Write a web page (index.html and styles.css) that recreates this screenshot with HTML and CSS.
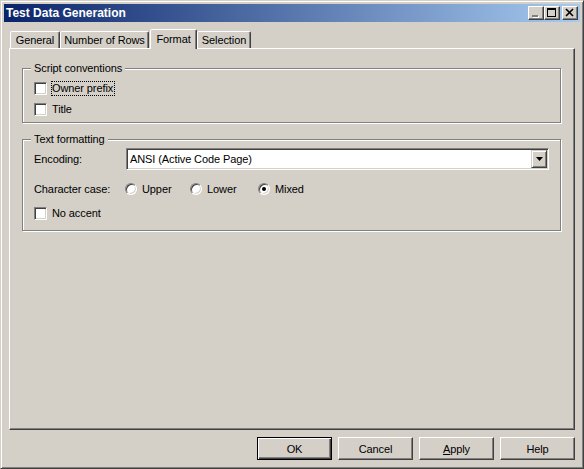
FILE: index.html
```html
<!DOCTYPE html>
<html>
<head>
<meta charset="utf-8">
<title>Test Data Generation</title>
<link rel="stylesheet" href="styles.css">
</head>
<body>
<div class="window">
  <div class="titlebar">
    <span class="title">Test Data Generation</span>
    <div class="caption-buttons">
      <span class="cbtn"><svg width="14" height="12" viewBox="0 0 14 12"><rect x="4" y="9" width="6" height="2" fill="#fff"/><rect x="3" y="8" width="6" height="2" fill="#808080"/></svg></span>
      <span class="cbtn"><svg width="14" height="12" viewBox="0 0 14 12"><rect x="2.5" y="1.5" width="8" height="8" fill="none" stroke="#000"/><rect x="2" y="2" width="9" height="1" fill="#000"/></svg></span>
      <span class="cbtn cbtn-close"><svg width="14" height="12" viewBox="0 0 14 12"><path d="M3 2 L10 9 M10 2 L3 9" stroke="#000" stroke-width="1.6" fill="none"/></svg></span>
    </div>
  </div>
  <div class="tabs">
    <div class="tab tab-general">General</div>
    <div class="tab tab-rows">Number of Rows</div>
    <div class="tab tab-format active">Format</div>
    <div class="tab tab-selection">Selection</div>
  </div>
  <div class="panel">
    <div class="group group-script">
      <div class="legend">Script conventions</div>
      <div class="check-row first"><span class="checkbox"></span><span class="check-label focus">Owner prefix</span></div>
      <div class="check-row"><span class="checkbox"></span><span class="check-label">Title</span></div>
    </div>
    <div class="group group-text">
      <div class="legend">Text formatting</div>
      <div class="field-row encoding-row">
        <span class="field-label">Encoding:</span>
        <div class="combo">
          <span class="combo-text">ANSI (Active Code Page)</span>
          <span class="combo-btn"><svg width="7" height="4" viewBox="0 0 7 4"><path d="M0 0 H7 L3.5 4 Z" fill="#000"/></svg></span>
        </div>
      </div>
      <div class="field-row case-row">
        <span class="field-label case-label">Character case:</span>
        <span class="radio-item w-upper"><span class="radio"></span>Upper</span>
        <span class="radio-item w-lower"><span class="radio"></span>Lower</span>
        <span class="radio-item"><span class="radio checked"></span>Mixed</span>
      </div>
      <div class="check-row accent-row"><span class="checkbox"></span><span class="check-label">No accent</span></div>
    </div>
  </div>
  <div class="buttons">
    <div class="btn btn-default">OK</div>
    <div class="btn">Cancel</div>
    <div class="btn"><span><u>A</u>pply</span></div>
    <div class="btn">Help</div>
  </div>
</div>
</body>
</html>
```
FILE: styles.css
```css
html, body {
  margin: 0;
  padding: 0;
  background: #D4D0C8;
}
body {
  font-family: "Liberation Sans", Arial, sans-serif;
  font-size: 11px;
  letter-spacing: -0.1px;
  color: #000;
}
.window {
  width: 584px;
  height: 469px;
  box-sizing: border-box;
  border: 1px solid;
  border-color: #D4D0C8 #404040 #404040 #D4D0C8;
  box-shadow: inset 1px 1px 0 #fff, inset -1px -1px 0 #808080;
  padding: 3px;
  display: flex;
  flex-direction: column;
  background: #D4D0C8;
}
.titlebar {
  height: 18px;
  flex: none;
  display: flex;
  align-items: center;
  background: linear-gradient(to right, #0A246A, #A6CAF0);
}
.title {
  flex: 1;
  color: #fff;
  font-weight: bold;
  font-size: 12px;
  letter-spacing: 0;
  padding-left: 2px;
  line-height: 18px;
}
.caption-buttons {
  display: flex;
  margin-right: 2px;
}
.cbtn {
  width: 16px;
  height: 14px;
  box-sizing: border-box;
  background: #D4D0C8;
  border: 1px solid;
  border-color: #fff #404040 #404040 #fff;
  box-shadow: inset -1px -1px 0 #808080;
  display: flex;
  align-items: center;
  justify-content: center;
}
.cbtn svg { display: block; }
.cbtn-close { margin-left: 2px; }

.tabs {
  flex: none;
  display: flex;
  align-items: flex-end;
  height: 19px;
  margin-top: 7px;
  padding-left: 6px;
}
.tab {
  height: 17px;
  box-sizing: border-box;
  border: 1px solid;
  border-bottom: none;
  border-color: #fff #404040 transparent #fff;
  box-shadow: inset -1px 0 0 #808080;
  border-radius: 2px 2px 0 0;
  display: flex;
  align-items: center;
  justify-content: center;
  background: #D4D0C8;
}
.tab-general { width: 50px; }
.tab-rows { width: 89px; margin-right: 1px; }
.tab-format { width: 47px; }
.tab-selection { width: 54px; }
.tab.active {
  height: 20px;
  margin-bottom: -1px;
  padding-bottom: 2px;
  position: relative;
  z-index: 1;
}

.panel {
  flex: 1;
  margin: 0 5px;
  border: 1px solid;
  border-color: #fff #404040 #404040 #fff;
  box-shadow: inset -1px -1px 0 #808080;
  padding: 19px 13px 0 12px;
  display: flex;
  flex-direction: column;
}
.group {
  border: 1px solid #808080;
  box-shadow: inset 1px 1px 0 #fff, 1px 1px 0 #fff;
  display: flex;
  flex-direction: column;
  padding: 0 11px 6px 11px;
}
.group-text {
  margin-top: 16px;
  padding-bottom: 10px;
}
.legend {
  align-self: flex-start;
  margin: -7px 0 0 -3px;
  padding: 0 3px;
  background: #D4D0C8;
  height: 13px;
  line-height: 13px;
}
.check-row {
  display: flex;
  align-items: center;
  height: 13px;
  margin-top: 8px;
}
.check-row.first { margin-top: 7px; }
.checkbox {
  flex: none;
  width: 13px;
  height: 13px;
  box-sizing: border-box;
  background: #fff;
  border: 1px solid;
  border-color: #808080 #fff #fff #808080;
  box-shadow: inset 1px 1px 0 #404040, inset -1px -1px 0 #D4D0C8;
  margin-right: 5px;
}
.check-label { line-height: 13px; }
.focus {
  border: 1px dotted #000;
  padding-right: 1px;
  margin-left: -1px;
}
.field-row {
  display: flex;
  align-items: center;
}
.encoding-row { margin-top: 2px; }
.field-label {
  flex: none;
  width: 92px;
}
.case-label { width: 91px; }
.combo {
  flex: 1;
  height: 22px;
  box-sizing: border-box;
  background: #fff;
  border: 1px solid;
  border-color: #808080 #fff #fff #808080;
  box-shadow: inset 1px 1px 0 #404040, inset -1px -1px 0 #D4D0C8;
  padding: 1px;
  display: flex;
  align-items: center;
}
.combo-text {
  flex: 1;
  padding-left: 2px;
}
.combo-btn {
  flex: none;
  width: 16px;
  height: 18px;
  box-sizing: border-box;
  background: #D4D0C8;
  border: 1px solid;
  border-color: #D4D0C8 #404040 #404040 #D4D0C8;
  box-shadow: inset 1px 1px 0 #fff, inset -1px -1px 0 #808080;
  display: flex;
  align-items: center;
  justify-content: center;
}
.combo-btn svg { display: block; }
.case-row {
  margin-top: 12px;
  height: 13px;
}
.radio-item {
  display: flex;
  align-items: center;
}
.w-upper { width: 65px; }
.w-lower { width: 68px; }
.radio {
  flex: none;
  width: 12px;
  height: 12px;
  box-sizing: border-box;
  border-radius: 50%;
  border: 1px solid;
  border-color: #808080 #fff #fff #808080;
  background: #fff;
  box-shadow: inset 1px 1px 0 #404040, inset -1px -1px 0 #D4D0C8;
  display: flex;
  align-items: center;
  justify-content: center;
  margin-right: 5px;
}
.radio.checked::after {
  content: "";
  width: 4px;
  height: 4px;
  border-radius: 50%;
  background: #000;
}
.accent-row { margin-top: 12px; }

.buttons {
  flex: none;
  display: flex;
  justify-content: flex-end;
  gap: 6px;
  margin: 7px 5px 5px 0;
}
.btn {
  width: 75px;
  height: 23px;
  box-sizing: border-box;
  border: 1px solid;
  border-color: #fff #404040 #404040 #fff;
  box-shadow: inset -1px -1px 0 #808080;
  display: flex;
  align-items: center;
  justify-content: center;
}
.btn-default {
  border: 1px solid #000;
  box-shadow: inset 1px 1px 0 #fff, inset -1px -1px 0 #404040, inset -2px -2px 0 #808080;
}
```
